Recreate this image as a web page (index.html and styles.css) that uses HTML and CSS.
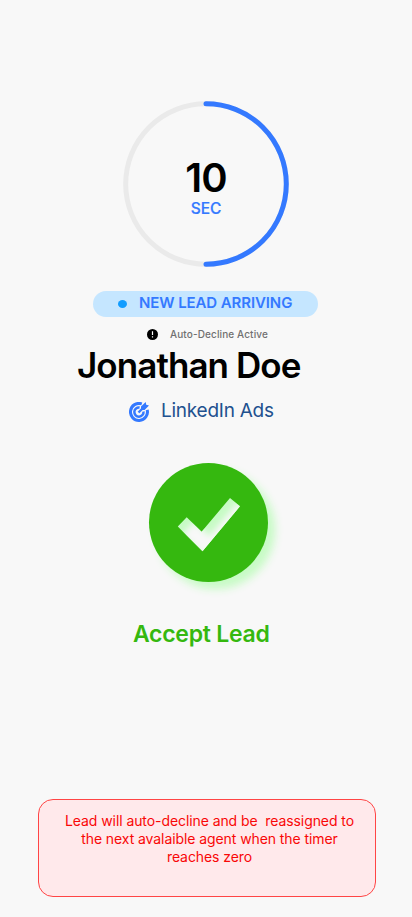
FILE: index.html
```html
<!DOCTYPE html>
<html lang="en">
<head>
<meta charset="utf-8">
<meta name="viewport" content="width=device-width, initial-scale=1">
<title>New Lead</title>
<link rel="stylesheet" href="styles.css">
</head>
<body>
<main class="screen">
  <section class="timer">
    <svg class="ring" viewBox="0 0 166 166" fill="none" stroke-width="5">
      <circle cx="83" cy="83" r="80.3" stroke="#eaeaea"/>
      <path d="M83 2.7a80.3 80.3 0 0 1 0 160.6" stroke="#3479ff" stroke-linecap="round"/>
    </svg>
    <div class="count">10</div>
    <div class="unit">SEC</div>
  </section>
  <div class="pill"><span class="dot"></span><span class="pill-text">NEW LEAD ARRIVING</span></div>
  <div class="status">
    <svg class="alert-icon" viewBox="0 0 11 11"><circle cx="5.5" cy="5.5" r="5.5"/><path d="M5.5 2.3v3.8M5.5 7.3v1.3" stroke="#fff" stroke-width="1.2"/></svg>
    <span>Auto-Decline Active</span>
  </div>
  <h1 class="name">Jonathan Doe</h1>
  <div class="source">
    <svg class="target" viewBox="0 0 20 20" fill="none" stroke="#3479ff">
      <path d="M12.8 1.9A8.5 8.5 0 1 0 18.2 7.8" stroke-width="3"/>
      <path d="M10.6 5.5A4.6 4.6 0 1 0 14.5 9.5" stroke-width="2.5"/>
      <path d="M9.5 10.5 15 5" stroke-width="2.4"/>
      <path d="M12 4.4 16.7 0 17.2 2.8 20 3.4 15.6 8H12Z" fill="#3479ff" stroke="none"/>
    </svg>
    <span>LinkedIn Ads</span>
  </div>
  <button class="accept" aria-label="Accept Lead">
    <svg class="check" viewBox="0 0 64 54">
      <defs><filter id="soft" x="-20%" y="-20%" width="140%" height="140%"><feGaussianBlur stdDeviation="3"/></filter>
      <clipPath id="mark"><path d="M.8 28.5 9.7 19.2 24.6 33.8 53 0 63 8.3 25.5 53.3Z"/></clipPath></defs>
      <g clip-path="url(#mark)"><path d="M0 0h64v54H0z" fill="#c7fbc5"/><path d="M8.8 36.5 17.7 27.2 32.6 41.8 61 8 71 16.3 33.5 61.3Z" fill="#f8f8f8" stroke="#f8f8f8" stroke-width="5" filter="url(#soft)"/></g>
    </svg>
  </button>
  <div class="accept-label">Accept Lead</div>
  <p class="notice">Lead will auto-decline and be&nbsp; reassigned to<br>the next avalaible agent when the timer<br>reaches zero</p>
</main>
</body>
</html>
```
FILE: styles.css
```css
* { box-sizing: border-box; }
body { margin: 0; background: #f8f8f8; font-family: Inter, "Liberation Sans", sans-serif; }
.screen { height: 917px; padding-top: 101px; display: flex; flex-direction: column; align-items: center; white-space: nowrap; }
.timer { width: 166px; height: 166px; display: grid; grid-template-rows: 98px 20px; justify-items: center; align-items: end; }
.timer > * { grid-column: 1; }
.ring { width: 166px; height: 166px; grid-row: 1 / 3; align-self: start; margin-bottom: -48px; }
.count { grid-row: 1; height: 36px; font-size: 40px; line-height: 30px; font-weight: 600; letter-spacing: -1px; }
.unit { grid-row: 2; font-size: 15.5px; line-height: 20px; font-weight: 500; color: #3479ff; -webkit-text-stroke: .2px #3479ff; }
.pill { margin: 24px 1px 0 0; width: 225px; height: 25.5px; flex: none; border-radius: 13px; background: #c5e6ff; display: flex; align-items: center; padding-left: 25px; }
.dot { width: 9px; height: 8px; border-radius: 50%; background: #109cff; }
.pill-text { margin: -2px 0 0 12px; font-size: 15px; line-height: 20px; font-weight: 600; letter-spacing: -.1px; color: #3479ff; }
.status { margin-top: 10.5px; height: 14px; width: 130px; padding-left: 6px; display: flex; align-items: center; font-size: 10px; font-weight: 500; letter-spacing: .12px; color: #707070; }
.alert-icon { width: 11px; height: 11px; margin-right: 12px; flex: none; }
.name { margin: 2px 0 0; width: 258px; font-size: 35px; line-height: 44px; font-weight: 600; letter-spacing: -.93px; }
.source { margin-top: 12px; width: 154px; height: 24px; display: flex; align-items: center; font-size: 19px; letter-spacing: -.25px; color: #21518f; }
.source span { margin-top: -2px; }
.target { width: 20px; height: 20px; margin: 2px 12px 0 0; flex: none; }
.accept { margin: 40px 0 0 5px; width: 119px; height: 119px; flex: none; padding: 0 0 0 1px; border: 0; border-radius: 50%; background: #35b80f; box-shadow: 7px 7px 8px #c7fbc5; display: grid; place-items: center; }
.check { width: 64px; height: 54px; margin-top: 5px; }
.accept-label { margin-top: 37px; width: 146px; font-size: 23px; line-height: 30px; font-weight: 600; letter-spacing: -.27px; color: #35b80f; }
.notice { margin: auto 0 20px 2px; width: 338px; height: 98px; padding: 12px 0 0 5px; border: 1px solid #ff4545; border-radius: 15px; background: #ffe9eb; color: #f90707; text-align: center; font-size: 14px; line-height: 18px; letter-spacing: -.08px; }
```
